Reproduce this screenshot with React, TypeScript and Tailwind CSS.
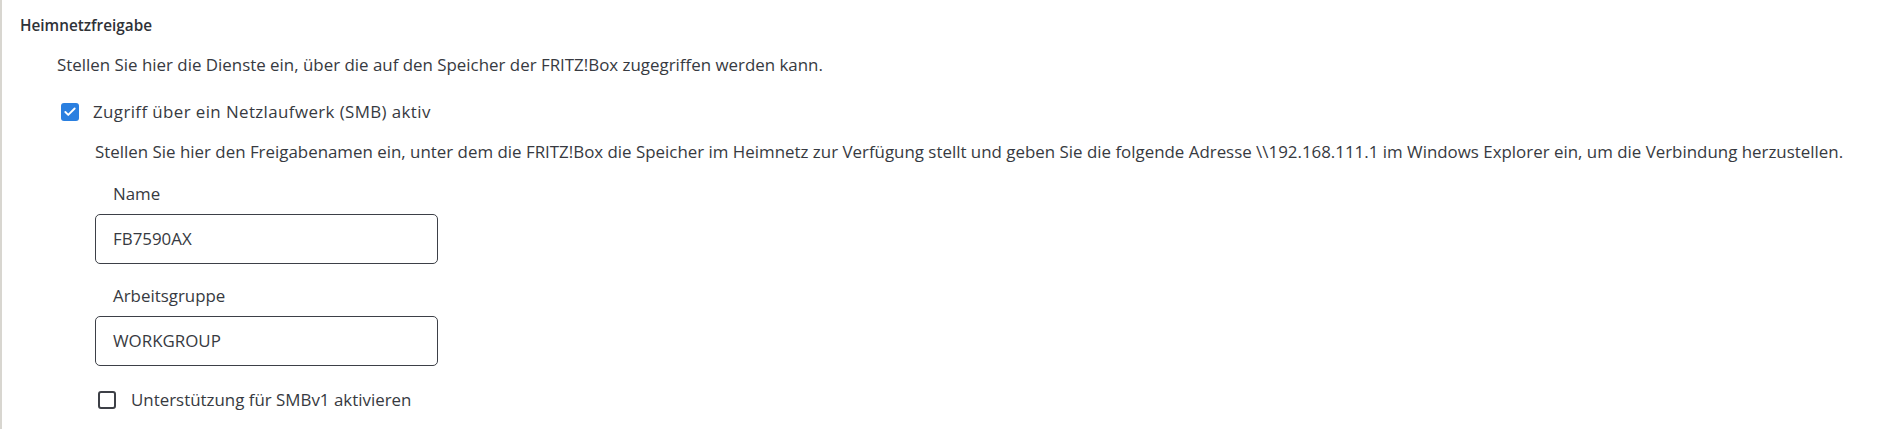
import { Check } from "lucide-react";

function Field({ label, value }: { label: string; value: string }) {
  return (
    <div className="flex flex-col">
      <label className="ml-[18px] mt-[22px] text-[16.9px] leading-[20px]">{label}</label>
      <div className="mt-[10px] flex h-[50px] w-[343px] items-center rounded-[5px] border border-[#3d4047] px-[17px]">
        <span className="text-[16.9px] leading-[20px]">{value}</span>
      </div>
    </div>
  );
}

export default function App() {
  return (
    <div
      className="h-[429px] w-full border-l-2 border-[#d8d6d0] bg-white text-[#373a41]"
      style={{ fontFamily: "'Open Sans', 'Liberation Sans', sans-serif" }}
    >
      <div className="flex flex-col pl-[18px] pt-[15px]">
        <h2 className="text-[15.3px] font-semibold leading-[20px] text-[#2f3237]">Heimnetzfreigabe</h2>

        <p className="ml-[37px] mt-[20px] text-[16.9px] leading-[20px]">
          Stellen Sie hier die Dienste ein, über die auf den Speicher der FRITZ!Box zugegriffen werden kann.
        </p>

        <label className="ml-[41px] mt-[27px] flex items-center gap-[14px] text-[16.9px] leading-[20px]">
          <span className="flex h-[18px] w-[18px] items-center justify-center rounded-[3px] bg-[#2a7fe0]">
            <Check size={14} strokeWidth={3.2} color="white" />
          </span>
          <span className="tracking-[0.4px]">Zugriff über ein Netzlaufwerk (SMB) aktiv</span>
        </label>

        <div className="ml-[75px] flex flex-col">
          <p className="mt-[20px] text-[16.9px] leading-[20px]">
            Stellen Sie hier den Freigabenamen ein, unter dem die FRITZ!Box die Speicher im Heimnetz zur Verfügung stellt und geben Sie die folgende Adresse \\192.168.111.1 im Windows Explorer ein, um die Verbindung herzustellen.
          </p>

          <Field label="Name" value="FB7590AX" />
          <Field label="Arbeitsgruppe" value="WORKGROUP" />

          <label className="ml-[3px] mt-[24px] flex items-center gap-[15px] text-[16.9px] leading-[20px]">
            <span className="h-[18px] w-[18px] rounded-[3px] border-2 border-[#3d4047]" />
            Unterstützung für SMBv1 aktivieren
          </label>
        </div>
      </div>
    </div>
  );
}
